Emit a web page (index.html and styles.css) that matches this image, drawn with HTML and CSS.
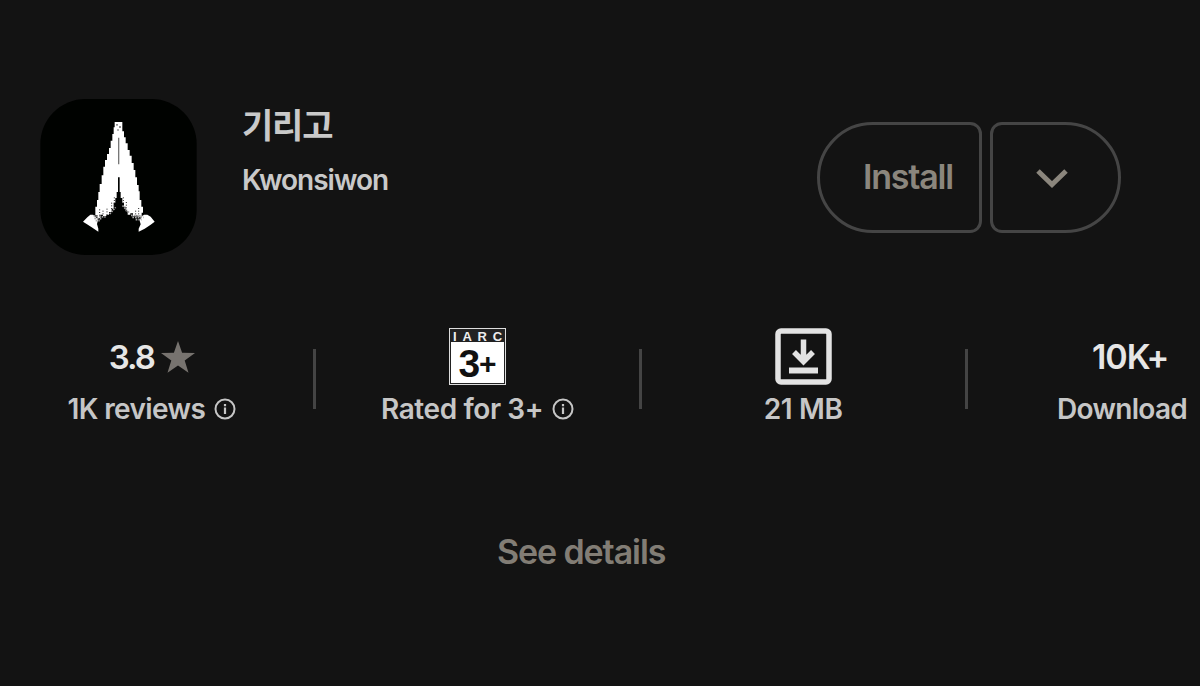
FILE: index.html
```
<!DOCTYPE html>
<html lang="en">
<head>
  <meta charset="UTF-8" />
  <meta name="viewport" content="width=device-width, initial-scale=1.0"/>
  <title>기리고</title>
  <link rel="stylesheet" href="styles.css">
</head>
<body>
  <div class="listing">

    <!-- App icon, name and install buttons -->
    <header class="app-header">
      <svg class="app-icon" viewBox="32 27 469 468">
        <rect x="32" y="27" width="469" height="468" rx="135" fill="#000200" />
        <g fill="#fff">
          <path d="M255 96H278V124H283V142H288V160H294V180H300V197H306V219H312V240H317V262H322V285H327V304H330V330H335V350H340V368H336V380H326V376H318V378H310V370H302V374H294V364H288V350H283V338H278V324H273V306H270V262H265V306H261V324H257V338H252V356H246V366H238V374H230V378H220V374H212V384H204V376H197V350H202V330H206V306H210V282H216V256H221V230H226V210H232V192H238V174H243V152H248V132H252V112H255Z" />
          <path d="M160 395l13-13 9-8 8 0 8 6 7 10-3 12 4 14 0 9-20-13-14-9z" />
          <path d="M375 395l-12-15-10-6-10 0-8 6-5 12 3 11-6 13 0 9 18-9 18-12z" />
        </g>
        <g fill="none" stroke="#aaa" stroke-width="5" stroke-dasharray="5 3">
          <path d="M192 378l36 3M194 385l24 1M198 392l12 0M304 376l34 2M308 382l34 0M318 389l18 0" />
          <path d="M240 372l18-20M298 368l-20-22" />
        </g>
        <g fill="none" stroke="#222" stroke-width="3">
          <path d="M267 143v80" stroke="#777" stroke-width="4" />
          <path d="M262 102v5M271 108v6M265 118v4" />
          <path d="M254 322v28M246 338v24M281 322v24M290 336v26M210 358v20M220 362v14M232 356v18M318 362v14M327 354v22" stroke-dasharray="3 5" />
        </g>
      </svg>

      <div class="app-title">
        <h1>기리고</h1>
        <p>Kwonsiwon</p>
      </div>

      <div class="actions">
        <button type="button" class="install-btn"><span>Install</span></button>
        <button type="button" class="more-btn">
          <svg width="32" height="20" viewBox="0 0 32 20">
            <path d="M2 3L16 16.500 30 3" fill="none" stroke="#8b867d" stroke-width="5" />
          </svg>
        </button>
      </div>
    </header>

    <!-- Stats row -->
    <section class="stats">
      <div class="stat">
        <div class="stat-top rating">
          <span>3.8</span>
          <svg width="34" height="32" viewBox="0 0 34 32">
            <path d="M17 0l4.100 11.800 12.900.2-10.300 7.600 3.800 12.200L17 24.500 6.500 31.800l3.800-12.200L0 12l12.900-.2z" fill="#77736f" />
          </svg>
        </div>
        <div class="stat-label reviews">
          <span>1K reviews</span>
          <svg class="info" viewBox="0 0 22 22">
            <circle cx="11" cy="11" r="9.500" fill="none" stroke="#c6c6c6" stroke-width="2" />
            <path d="M11 9.500v6.500M11 6v2.200" stroke="#c6c6c6" stroke-width="2.200" />
          </svg>
        </div>
      </div>
      <div class="divider"></div>

      <div class="stat">
        <div class="stat-top">
          <div class="iarc">
            <div class="iarc-head"><span>I</span><span>A</span><span>R</span><span>C</span></div>
            <div class="iarc-age"><span>3</span><span class="plus">+</span></div>
          </div>
        </div>
        <div class="stat-label rated">
          <span>Rated for 3+</span>
          <svg class="info" viewBox="0 0 22 22">
            <circle cx="11" cy="11" r="9.500" fill="none" stroke="#c6c6c6" stroke-width="2" />
            <path d="M11 9.500v6.500M11 6v2.200" stroke="#c6c6c6" stroke-width="2.200" />
          </svg>
        </div>
      </div>
      <div class="divider"></div>

      <div class="stat">
        <div class="stat-top">
          <svg width="57" height="57" viewBox="0 0 57 57" fill="none" stroke="#e3e3e3">
            <rect x="3" y="3" width="51" height="51" rx="3" stroke-width="5.500" />
            <path d="M28.500 11.500v20M19 24l9.500 9.500L38 24" stroke-width="5.500" />
            <path d="M14 42.500h29" stroke-width="6" />
          </svg>
        </div>
        <div class="stat-label size"><span>21 MB</span></div>
      </div>
      <div class="divider"></div>

      <div class="stat last">
        <div class="stat-top count"><span>10K+</span></div>
        <div class="stat-label downloads"><span>Download</span></div>
      </div>
    </section>

    <a class="details">See details</a>
  </div>
</body>
</html>
```
FILE: styles.css
```
body, html {
  margin: 0;
  padding: 0;
  background-color: #131313;
  font-family: Inter, "Noto Sans CJK KR", sans-serif;
  height: 100%;
  overflow: hidden;
}

.listing {
  display: flex;
  flex-direction: column;
  width: 1200px;
  height: 686px;
  box-sizing: border-box;
  padding-top: 99px;
}

.app-header {
  display: flex;
  align-items: flex-start;
  height: 229px;
  padding: 0 79px 0 40px;
}

.app-icon {
  width: 157px;
  height: 156px;
}

.app-title {
  flex: 1;
  margin-left: 45px;
}

.app-title h1 {
  margin: 2px 0 0;
  font-family: "Noto Sans CJK KR", sans-serif;
  font-size: 34px;
  line-height: 46px;
  font-weight: 700;
  letter-spacing: -1.2px;
  color: #c9c9c9;
}

.app-title p {
  margin: 15px 0 0;
  font-size: 28px;
  line-height: 36px;
  font-weight: 600;
  letter-spacing: -1px;
  color: #c9c9c9;
}

.actions {
  display: flex;
  gap: 8px;
  margin-top: 23px;
}

.actions button {
  display: flex;
  align-items: center;
  justify-content: center;
  box-sizing: border-box;
  height: 111px;
  padding: 0;
  background: none;
  border: 3px solid #454545;
  cursor: pointer;
}

.actions .install-btn {
  width: 165px;
  padding: 0 0 3px 17px;
  border-radius: 56px 12px 12px 56px;
  font-family: inherit;
  font-size: 34px;
  font-weight: 600;
  letter-spacing: -1.2px;
  color: #8b867d;
}

.actions .more-btn {
  width: 131px;
  padding-right: 8px;
  border-radius: 12px 56px 56px 12px;
}

.stats {
  display: flex;
  align-items: flex-start;
}

.stat {
  flex: none;
  width: 303.7px;
}

/* cut off by the right edge of the row */
.stat.last {
  width: 223px;
}

.stat-top {
  display: flex;
  align-items: center;
  justify-content: center;
  height: 57px;
  font-size: 34px;
  font-weight: 600;
  color: #e6e6e6;
}

.stat-label {
  display: flex;
  align-items: center;
  justify-content: center;
  height: 36px;
  margin-top: 6px;
  font-size: 28px;
  font-weight: 600;
  color: #c6c6c6;
  white-space: nowrap;
}

.rating {
  gap: 7px;
  font-size: 33px;
  letter-spacing: -2px;
}

.last .count {
  justify-content: flex-start;
  padding-left: 115px;
  letter-spacing: -1.1px;
}

.last .downloads {
  justify-content: flex-start;
  padding-left: 80px;
  letter-spacing: -0.7px;
}

.reviews {
  letter-spacing: -0.6px;
}

.rated {
  letter-spacing: -0.4px;
}

.size {
  letter-spacing: -0.3px;
}

.info {
  width: 22px;
  height: 22px;
  margin-left: 9px;
}

.divider {
  flex: none;
  width: 3px;
  height: 60px;
  margin: 21px 9.500px 0;
  background-color: #444;
}

.iarc {
  box-sizing: border-box;
  width: 57px;
  height: 57px;
  padding: 1px;
  border: 1px solid #ddd;
  background-color: #222;
  font-family: "Liberation Sans", sans-serif;
  font-weight: 700;
}

.iarc-head {
  display: flex;
  justify-content: space-between;
  height: 12px;
  padding: 0 2px;
  font-size: 13px;
  line-height: 13px;
  color: #eee;
}

.iarc-age {
  display: flex;
  align-items: center;
  justify-content: center;
  height: 41px;
  background-color: #fff;
  font-size: 39px;
  line-height: 43px;
  color: #111;
}

.iarc-age span {
  height: 41px;
}

.iarc-age .plus {
  font-size: 30px;
  margin-left: -1px;
}

.details {
  align-self: flex-start;
  margin: 103px 0 0 497px;
  font-size: 34px;
  line-height: 44px;
  font-weight: 600;
  letter-spacing: -1.1px;
  color: #827d75;
}
```
